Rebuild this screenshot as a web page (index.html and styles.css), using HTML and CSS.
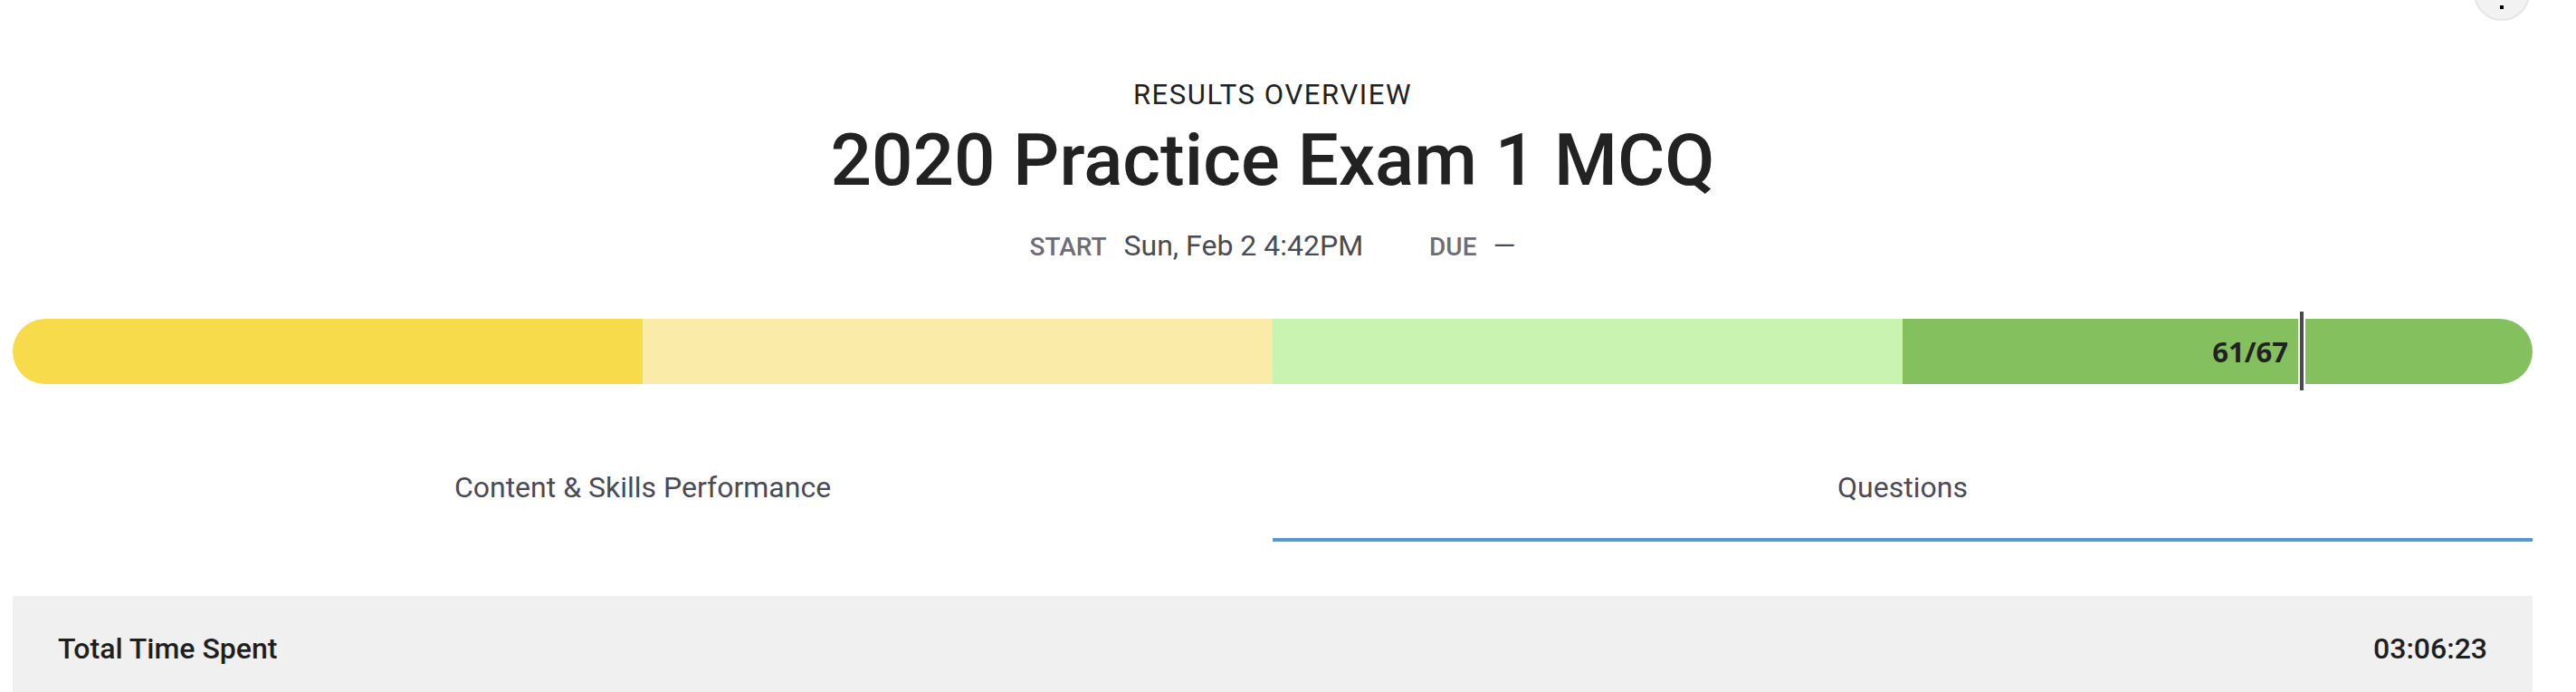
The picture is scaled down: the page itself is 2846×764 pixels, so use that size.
FILE: index.html
```html
<!DOCTYPE html>
<html lang="en">
<head>
<meta charset="utf-8">
<title>Results Overview</title>
<link rel="stylesheet" href="styles.css">
</head>
<body>
<div class="menu-btn"><span class="dot"></span><span class="dot"></span><span class="dot"></span></div>
<main class="page">
  <header class="header">
    <div class="eyebrow">RESULTS OVERVIEW</div>
    <h1 class="title">2020 Practice Exam 1 MCQ</h1>
    <div class="meta">
      <span class="meta-label">START</span>
      <span class="meta-value">Sun, Feb 2 4:42PM</span>
      <span class="meta-label due">DUE</span>
      <span class="meta-value">—</span>
    </div>
  </header>

  <div class="score-bar">
    <div class="track">
      <div class="seg seg1"></div>
      <div class="seg seg2"></div>
      <div class="seg seg3"></div>
      <div class="seg seg4"></div>
    </div>
    <div class="marker" style="left: 90.7%;"><span class="score">61/67</span></div>
  </div>

  <nav class="tabs">
    <div class="tab">Content &amp; Skills Performance</div>
    <div class="tab active">Questions</div>
  </nav>

  <section class="panel">
    <span class="panel-label">Total Time Spent</span>
    <span class="panel-value">03:06:23</span>
  </section>
</main>
</body>
</html>
```

FILE: styles.css
```css
html, body {
  margin: 0;
  padding: 0;
  background: #ffffff;
  overflow: hidden;
}

body {
  font-family: Roboto, "Liberation Sans", Arial, sans-serif;
  color: #222222;
  width: 2846px;
  height: 764px;
  position: relative;
}

.menu-btn {
  position: absolute;
  left: 2733px;
  top: -39px;
  width: 62px;
  height: 62px;
  box-sizing: border-box;
  border-radius: 50%;
  background: #f2f2f2;
  border: 2px solid #e6e6e6;
  display: flex;
  flex-direction: column;
  align-items: center;
  justify-content: center;
  gap: 6px;
  padding-top: 12px;
}

.menu-btn .dot {
  width: 4px;
  height: 4px;
  background: #000000;
}

.page {
  padding: 0 48px 0 14px;
}

.header {
  padding-top: 87px;
  text-align: center;
}

.eyebrow {
  font-size: 31px;
  line-height: 36px;
  font-weight: 400;
  letter-spacing: 1.6px;
  color: #222222;
}

.title {
  margin: 6px 0 0;
  font-size: 80px;
  line-height: 96px;
  font-weight: 500;
  color: #222222;
}

.meta {
  margin-top: 26px;
  display: flex;
  justify-content: center;
  align-items: baseline;
  line-height: 40px;
}

.meta-label {
  font-size: 28px;
  font-weight: 500;
  color: #6d6d77;
  margin-right: 19px;
}

.meta-label.due {
  margin-left: 73px;
  margin-right: 18px;
}

.meta-value {
  font-size: 32px;
  color: #4a4a55;
}

.score-bar {
  position: relative;
  margin-top: 59px;
  height: 72px;
}

.track {
  display: flex;
  height: 72px;
  border-radius: 36px;
  overflow: hidden;
}

.seg {
  flex: 1;
}

.seg1 { background: #f7db4a; }
.seg2 { background: #fbeba8; }
.seg3 { background: #c9f3b1; }
.seg4 { background: #84c15e; }

.marker {
  position: absolute;
  top: -8px;
  bottom: -7px;
  width: 4px;
  background: #4a4a55;
  border-left: 2px solid #ffffff;
  border-right: 2px solid #ffffff;
  box-sizing: content-box;
}

.marker .score {
  position: absolute;
  right: calc(100% + 13px);
  top: 50%;
  transform: translateY(-50%);
  font-family: "Open Sans", "DejaVu Sans", sans-serif;
  font-weight: 700;
  font-size: 31px;
  line-height: 40px;
  color: #222222;
  white-space: nowrap;
}

.tabs {
  display: flex;
  margin-top: 59px;
}

.tab {
  flex: 1;
  text-align: center;
  font-size: 32px;
  line-height: 40px;
  color: #4a4a55;
  padding: 35px 0 36px;
  border-bottom: 4px solid transparent;
}

.tab.active {
  border-bottom-color: #5599d2;
}

.panel {
  margin-top: 60px;
  background: #f0f0f0;
  padding: 38px 50px 40px;
  display: flex;
  justify-content: space-between;
  align-items: baseline;
  font-size: 32px;
  line-height: 40px;
  font-weight: 500;
  color: #1f1f1f;
}
```
